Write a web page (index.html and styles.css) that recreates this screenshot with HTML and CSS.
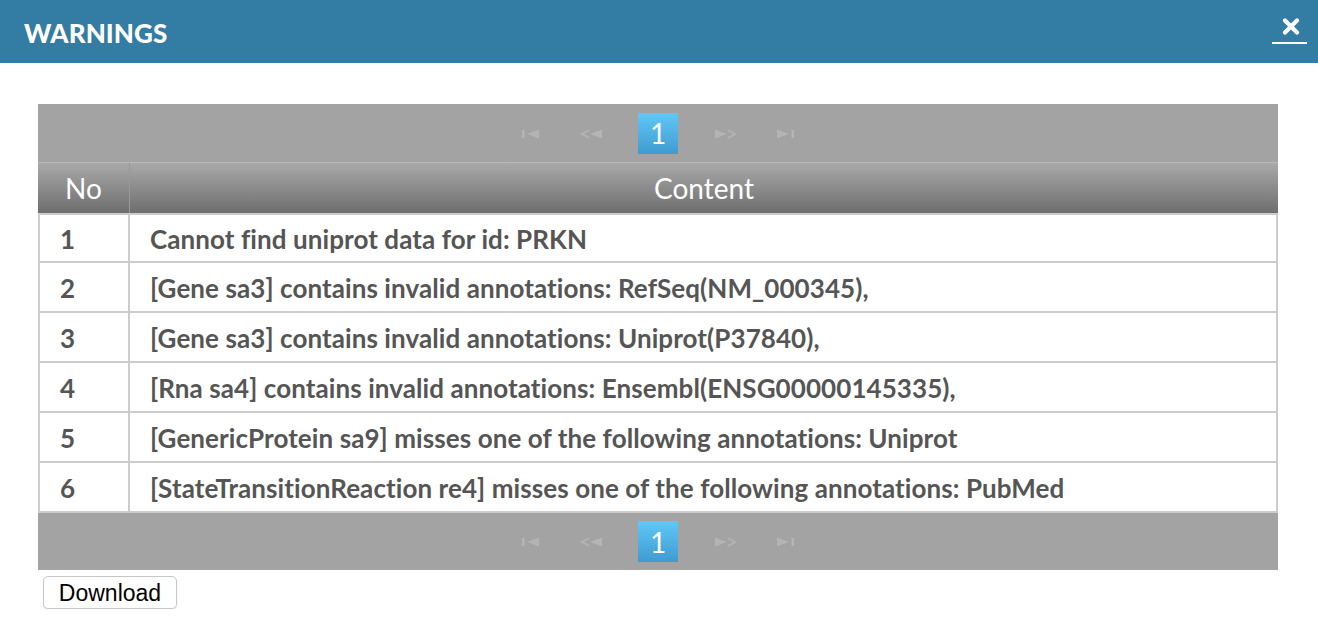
FILE: index.html
```html
<!DOCTYPE html>
<html>
<head>
<meta charset="utf-8">
<link rel="stylesheet" href="styles.css">
</head>
<body>
<div class="titlebar">
  <span class="title">WARNINGS</span>
  <span class="close"><svg width="18" height="17" viewBox="0 0 18 17"><path d="M3 2.5 L15 14.5 M15 2.5 L3 14.5" stroke="#fff" stroke-width="4.2" stroke-linecap="round"/></svg></span>
</div>
<div class="content">
  <div class="grid">
    <div class="pager pager-top">
      <span class="pg-icon"><svg width="20" height="10" viewBox="0 0 20 10"><rect x="1" y="1" width="2.5" height="8"/><path d="M6 5 L18 0.5 L18 9.5 Z"/></svg></span>
      <span class="pg-icon"><svg width="23" height="10" viewBox="0 0 23 10"><path d="M9 1 L2 5 L9 9" fill="none" stroke="#b4b4b4" stroke-width="2"/><path d="M10 5 L22 0.5 L22 9.5 Z"/></svg></span>
      <span class="pg-num">1</span>
      <span class="pg-icon"><svg width="23" height="10" viewBox="0 0 23 10"><path d="M1 0.5 L13 5 L1 9.5 Z"/><path d="M14 1 L21 5 L14 9" fill="none" stroke="#b4b4b4" stroke-width="2"/></svg></span>
      <span class="pg-icon"><svg width="20" height="10" viewBox="0 0 20 10"><path d="M2 0.5 L14 5 L2 9.5 Z"/><rect x="16.5" y="1" width="2.5" height="8"/></svg></span>
    </div>
    <div class="row head">
      <div class="c1">No</div>
      <div class="c2">Content</div>
    </div>
    <div class="row body first"><div class="c1">1</div><div class="c2">Cannot find uniprot data for id: PRKN</div></div>
    <div class="row body"><div class="c1">2</div><div class="c2">[Gene sa3] contains invalid annotations: RefSeq(NM_000345),</div></div>
    <div class="row body"><div class="c1">3</div><div class="c2">[Gene sa3] contains invalid annotations: Uniprot(P37840),</div></div>
    <div class="row body"><div class="c1">4</div><div class="c2">[Rna sa4] contains invalid annotations: Ensembl(ENSG00000145335),</div></div>
    <div class="row body"><div class="c1">5</div><div class="c2">[GenericProtein sa9] misses one of the following annotations: Uniprot</div></div>
    <div class="row body"><div class="c1">6</div><div class="c2">[StateTransitionReaction re4] misses one of the following annotations: PubMed</div></div>
    <div class="pager pager-bottom">
      <span class="pg-icon"><svg width="20" height="10" viewBox="0 0 20 10"><rect x="1" y="1" width="2.5" height="8"/><path d="M6 5 L18 0.5 L18 9.5 Z"/></svg></span>
      <span class="pg-icon"><svg width="23" height="10" viewBox="0 0 23 10"><path d="M9 1 L2 5 L9 9" fill="none" stroke="#b4b4b4" stroke-width="2"/><path d="M10 5 L22 0.5 L22 9.5 Z"/></svg></span>
      <span class="pg-num">1</span>
      <span class="pg-icon"><svg width="23" height="10" viewBox="0 0 23 10"><path d="M1 0.5 L13 5 L1 9.5 Z"/><path d="M14 1 L21 5 L14 9" fill="none" stroke="#b4b4b4" stroke-width="2"/></svg></span>
      <span class="pg-icon"><svg width="20" height="10" viewBox="0 0 20 10"><path d="M2 0.5 L14 5 L2 9.5 Z"/><rect x="16.5" y="1" width="2.5" height="8"/></svg></span>
    </div>
  </div>
  <button class="download">Download</button>
</div>
</body>
</html>
```

FILE: styles.css
```css
html, body {
  margin: 0;
  padding: 0;
  background: #fff;
  font-family: Lato, "Open Sans", sans-serif;
}
.titlebar {
  height: 63px;
  background: #337ca3;
  display: flex;
  align-items: center;
  justify-content: space-between;
  padding: 0 11px 0 24px;
  box-sizing: border-box;
}
.title {
  color: #fff;
  font-weight: 900;
  font-size: 26px;
  letter-spacing: 0.1px;
  margin-top: 2px;
}
.close {
  width: 35px;
  height: 26px;
  display: flex;
  justify-content: center;
  align-items: flex-start;
  border-bottom: 2px solid #fff;
  box-sizing: border-box;
  margin-top: -1px;
}
.close svg {
  display: block;
  margin-left: 2px;
}
.content {
  padding: 41px 40px 0 38px;
}
.grid {
  width: 1240px;
}
.pager {
  background: #a3a3a3;
  display: flex;
  align-items: center;
  justify-content: center;
}
.pager-top {
  height: 58px;
  border-bottom: 1px solid #b8b8b8;
}
.pager-bottom {
  height: 57px;
}
.pg-icon {
  width: 60px;
  display: flex;
  justify-content: center;
  fill: #b4b4b4;
  margin-top: 1px;
}
.pg-icon svg {
  display: block;
}
.pg-num {
  width: 40px;
  height: 41px;
  margin: 0 17px;
  background: linear-gradient(#60c8f7, #3f9bd0);
  color: #fff;
  font-size: 28px;
  display: flex;
  align-items: center;
  justify-content: center;
}
.row {
  display: flex;
}
.head {
  height: 50px;
  background: linear-gradient(#a9a9a9, #6e6e6e);
  color: #fff;
  font-size: 28px;
}
.head .c1 {
  width: 92px;
  border-right: 1px solid #999;
  box-sizing: border-box;
  display: flex;
  align-items: center;
  justify-content: center;
}
.head .c2 {
  flex: 1;
  display: flex;
  align-items: center;
  justify-content: center;
}
.body {
  height: 50px;
  border-left: 2px solid #ccc;
  border-right: 2px solid #ccc;
  border-bottom: 2px solid #ccc;
  box-sizing: border-box;
  color: #555;
  font-weight: bold;
  font-size: 26px;
  letter-spacing: 0.08px;
}
.body.first {
  border-top: 2px solid #ccc;
}
.body .c1 {
  width: 90px;
  border-right: 2px solid #ccc;
  box-sizing: border-box;
  display: flex;
  align-items: center;
  padding-left: 20px;
  padding-top: 2px;
}
.body .c2 {
  flex: 1;
  display: flex;
  align-items: center;
  padding-left: 20px;
  padding-top: 2px;
}
.download {
  display: block;
  margin: 6px 0 0 5px;
  width: 134px;
  height: 33px;
  background: #fff;
  border: 1px solid #c6c6c6;
  border-radius: 5px;
  font-family: "Liberation Sans", sans-serif;
  font-size: 23px;
  color: #000;
  padding: 2px 0 0 0;
  box-shadow: 0 1px 1px rgba(0,0,0,0.1);
}
```
